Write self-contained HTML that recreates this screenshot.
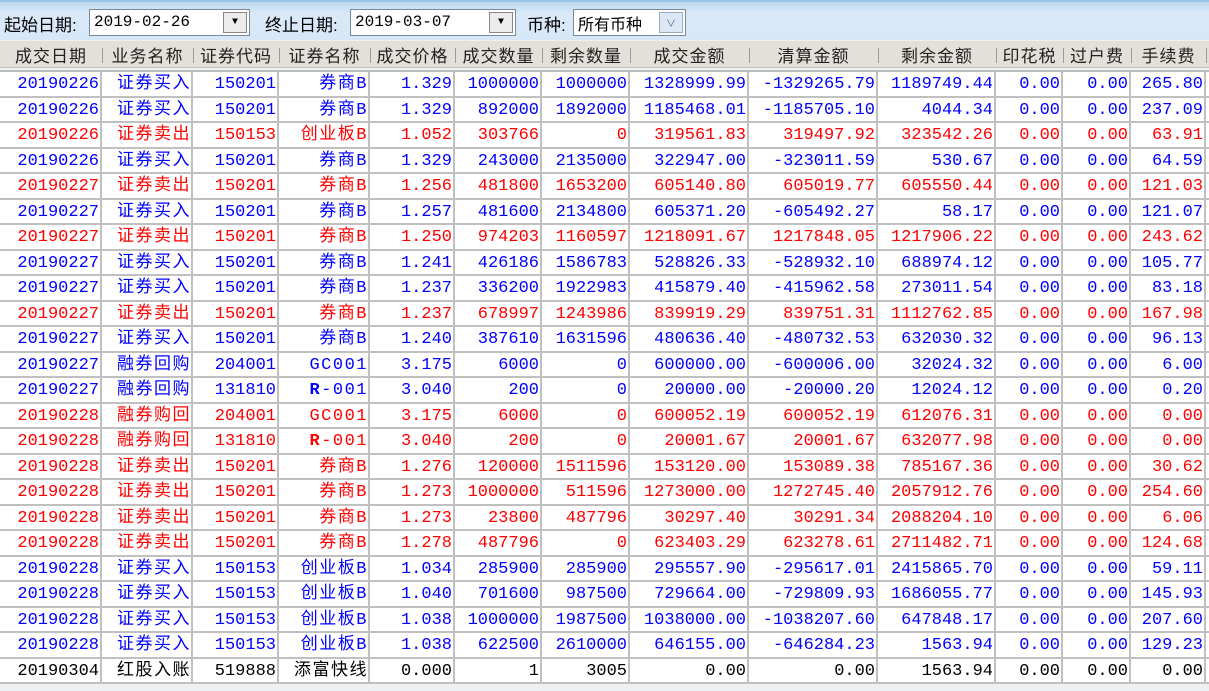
<!DOCTYPE html><html><head><meta charset="utf-8"><style>
*{margin:0;padding:0;box-sizing:border-box}
body{width:1209px;height:691px;overflow:hidden;background:#eef0f2;font-family:"Liberation Mono","Noto Sans CJK SC",monospace;font-size:17px}
#tb{position:absolute;left:0;top:0;width:1209px;height:40px;background:linear-gradient(#bcd7f0,#d9e9f8 30%,#d6e7f7);border-top:2px solid #9cc2e6}
.lb{position:absolute;top:9px;font-family:"Liberation Sans","Noto Sans CJK SC",sans-serif;font-size:17px;color:#000}
.in{position:absolute;top:7px;height:27px;background:#fff;border:1px solid #7a8a99;font-size:16px;padding:3px 0 0 4px;color:#000}
.bt{position:absolute;top:2px;right:2px;width:24px;height:21px;background:#ececec;border:1px solid #888;font-size:10px;text-align:center;line-height:20px}
#hd{position:absolute;left:0;top:41px;width:1209px;height:27px;background:#e3e0d9;border-bottom:1px solid #c8c4bc;font-family:"Noto Sans CJK SC",sans-serif;font-size:17px;color:#222}
#hd span{position:absolute;top:1px;line-height:26px;text-align:center;letter-spacing:1px}
#hd i{position:absolute;top:7px;width:1px;height:15px;background:#9a9a9a}
#tbl{position:absolute;left:0;top:70px;width:1209px;background:#fff;border-top:2px solid #bbb}
.r{display:flex;height:25.5px;border-bottom:2px solid #c0c0c0}
.r div{border-right:2px solid #c0c0c0;text-align:right;padding-right:1px;line-height:25px;white-space:nowrap;overflow:hidden}
.r div:nth-child(2),.r div:nth-child(4){letter-spacing:1.5px;padding-right:0}
.b div{color:#0000ff}.d div{color:#ff0000}.k div{color:#000}
</style></head><body>
<div id="tb">
<span class="lb" style="left:4px">起始日期:</span>
<div class="in" style="left:89px;width:161px">2019-02-26<div class="bt">▼</div></div>
<span class="lb" style="left:265px">终止日期:</span>
<div class="in" style="left:350px;width:166px">2019-03-07<div class="bt">▼</div></div>
<span class="lb" style="left:527px">币种:</span>
<div class="in" style="left:573px;width:113px;font-family:'Noto Sans CJK SC',sans-serif;padding-top:1px">所有币种<div class="bt" style="background:#dce8f5;border-color:#9ab;color:#4a6a9a">∨</div></div>
</div>
<div id="hd">
<span style="left:0;width:102px">成交日期</span><i style="left:102px"></i>
<span style="left:102px;width:91px">业务名称</span><i style="left:193px"></i>
<span style="left:193px;width:86px">证券代码</span><i style="left:279px"></i>
<span style="left:279px;width:91px">证券名称</span><i style="left:370px"></i>
<span style="left:370px;width:85px">成交价格</span><i style="left:455px"></i>
<span style="left:455px;width:87px">成交数量</span><i style="left:542px"></i>
<span style="left:542px;width:88px">剩余数量</span><i style="left:630px"></i>
<span style="left:630px;width:119px">成交金额</span><i style="left:749px"></i>
<span style="left:749px;width:129px">清算金额</span><i style="left:878px"></i>
<span style="left:878px;width:118px">剩余金额</span><i style="left:996px"></i>
<span style="left:996px;width:67px">印花税</span><i style="left:1063px"></i>
<span style="left:1063px;width:68px">过户费</span><i style="left:1131px"></i>
<span style="left:1131px;width:75px">手续费</span><i style="left:1206px"></i>
</div>
<div id="tbl">
<style>.r div:nth-child(1){width:102px}.r div:nth-child(2){width:91px}.r div:nth-child(3){width:86px}.r div:nth-child(4){width:91px}.r div:nth-child(5){width:85px}.r div:nth-child(6){width:87px}.r div:nth-child(7){width:88px}.r div:nth-child(8){width:119px}.r div:nth-child(9){width:129px}.r div:nth-child(10){width:118px}.r div:nth-child(11){width:67px}.r div:nth-child(12){width:68px}.r div:nth-child(13){width:75px}</style>
<div class="r b"><div>20190226</div><div>证券买入</div><div>150201</div><div>券商B</div><div>1.329</div><div>1000000</div><div>1000000</div><div>1328999.99</div><div>-1329265.79</div><div>1189749.44</div><div>0.00</div><div>0.00</div><div>265.80</div></div>
<div class="r b"><div>20190226</div><div>证券买入</div><div>150201</div><div>券商B</div><div>1.329</div><div>892000</div><div>1892000</div><div>1185468.01</div><div>-1185705.10</div><div>4044.34</div><div>0.00</div><div>0.00</div><div>237.09</div></div>
<div class="r d"><div>20190226</div><div>证券卖出</div><div>150153</div><div>创业板B</div><div>1.052</div><div>303766</div><div>0</div><div>319561.83</div><div>319497.92</div><div>323542.26</div><div>0.00</div><div>0.00</div><div>63.91</div></div>
<div class="r b"><div>20190226</div><div>证券买入</div><div>150201</div><div>券商B</div><div>1.329</div><div>243000</div><div>2135000</div><div>322947.00</div><div>-323011.59</div><div>530.67</div><div>0.00</div><div>0.00</div><div>64.59</div></div>
<div class="r d"><div>20190227</div><div>证券卖出</div><div>150201</div><div>券商B</div><div>1.256</div><div>481800</div><div>1653200</div><div>605140.80</div><div>605019.77</div><div>605550.44</div><div>0.00</div><div>0.00</div><div>121.03</div></div>
<div class="r b"><div>20190227</div><div>证券买入</div><div>150201</div><div>券商B</div><div>1.257</div><div>481600</div><div>2134800</div><div>605371.20</div><div>-605492.27</div><div>58.17</div><div>0.00</div><div>0.00</div><div>121.07</div></div>
<div class="r d"><div>20190227</div><div>证券卖出</div><div>150201</div><div>券商B</div><div>1.250</div><div>974203</div><div>1160597</div><div>1218091.67</div><div>1217848.05</div><div>1217906.22</div><div>0.00</div><div>0.00</div><div>243.62</div></div>
<div class="r b"><div>20190227</div><div>证券买入</div><div>150201</div><div>券商B</div><div>1.241</div><div>426186</div><div>1586783</div><div>528826.33</div><div>-528932.10</div><div>688974.12</div><div>0.00</div><div>0.00</div><div>105.77</div></div>
<div class="r b"><div>20190227</div><div>证券买入</div><div>150201</div><div>券商B</div><div>1.237</div><div>336200</div><div>1922983</div><div>415879.40</div><div>-415962.58</div><div>273011.54</div><div>0.00</div><div>0.00</div><div>83.18</div></div>
<div class="r d"><div>20190227</div><div>证券卖出</div><div>150201</div><div>券商B</div><div>1.237</div><div>678997</div><div>1243986</div><div>839919.29</div><div>839751.31</div><div>1112762.85</div><div>0.00</div><div>0.00</div><div>167.98</div></div>
<div class="r b"><div>20190227</div><div>证券买入</div><div>150201</div><div>券商B</div><div>1.240</div><div>387610</div><div>1631596</div><div>480636.40</div><div>-480732.53</div><div>632030.32</div><div>0.00</div><div>0.00</div><div>96.13</div></div>
<div class="r b"><div>20190227</div><div>融券回购</div><div>204001</div><div>GC001</div><div>3.175</div><div>6000</div><div>0</div><div>600000.00</div><div>-600006.00</div><div>32024.32</div><div>0.00</div><div>0.00</div><div>6.00</div></div>
<div class="r b"><div>20190227</div><div>融券回购</div><div>131810</div><div><b>R</b>-001</div><div>3.040</div><div>200</div><div>0</div><div>20000.00</div><div>-20000.20</div><div>12024.12</div><div>0.00</div><div>0.00</div><div>0.20</div></div>
<div class="r d"><div>20190228</div><div>融券购回</div><div>204001</div><div>GC001</div><div>3.175</div><div>6000</div><div>0</div><div>600052.19</div><div>600052.19</div><div>612076.31</div><div>0.00</div><div>0.00</div><div>0.00</div></div>
<div class="r d"><div>20190228</div><div>融券购回</div><div>131810</div><div><b>R</b>-001</div><div>3.040</div><div>200</div><div>0</div><div>20001.67</div><div>20001.67</div><div>632077.98</div><div>0.00</div><div>0.00</div><div>0.00</div></div>
<div class="r d"><div>20190228</div><div>证券卖出</div><div>150201</div><div>券商B</div><div>1.276</div><div>120000</div><div>1511596</div><div>153120.00</div><div>153089.38</div><div>785167.36</div><div>0.00</div><div>0.00</div><div>30.62</div></div>
<div class="r d"><div>20190228</div><div>证券卖出</div><div>150201</div><div>券商B</div><div>1.273</div><div>1000000</div><div>511596</div><div>1273000.00</div><div>1272745.40</div><div>2057912.76</div><div>0.00</div><div>0.00</div><div>254.60</div></div>
<div class="r d"><div>20190228</div><div>证券卖出</div><div>150201</div><div>券商B</div><div>1.273</div><div>23800</div><div>487796</div><div>30297.40</div><div>30291.34</div><div>2088204.10</div><div>0.00</div><div>0.00</div><div>6.06</div></div>
<div class="r d"><div>20190228</div><div>证券卖出</div><div>150201</div><div>券商B</div><div>1.278</div><div>487796</div><div>0</div><div>623403.29</div><div>623278.61</div><div>2711482.71</div><div>0.00</div><div>0.00</div><div>124.68</div></div>
<div class="r b"><div>20190228</div><div>证券买入</div><div>150153</div><div>创业板B</div><div>1.034</div><div>285900</div><div>285900</div><div>295557.90</div><div>-295617.01</div><div>2415865.70</div><div>0.00</div><div>0.00</div><div>59.11</div></div>
<div class="r b"><div>20190228</div><div>证券买入</div><div>150153</div><div>创业板B</div><div>1.040</div><div>701600</div><div>987500</div><div>729664.00</div><div>-729809.93</div><div>1686055.77</div><div>0.00</div><div>0.00</div><div>145.93</div></div>
<div class="r b"><div>20190228</div><div>证券买入</div><div>150153</div><div>创业板B</div><div>1.038</div><div>1000000</div><div>1987500</div><div>1038000.00</div><div>-1038207.60</div><div>647848.17</div><div>0.00</div><div>0.00</div><div>207.60</div></div>
<div class="r b"><div>20190228</div><div>证券买入</div><div>150153</div><div>创业板B</div><div>1.038</div><div>622500</div><div>2610000</div><div>646155.00</div><div>-646284.23</div><div>1563.94</div><div>0.00</div><div>0.00</div><div>129.23</div></div>
<div class="r k"><div>20190304</div><div>红股入账</div><div>519888</div><div>添富快线</div><div>0.000</div><div>1</div><div>3005</div><div>0.00</div><div>0.00</div><div>1563.94</div><div>0.00</div><div>0.00</div><div>0.00</div></div>
</div>
</body></html>
